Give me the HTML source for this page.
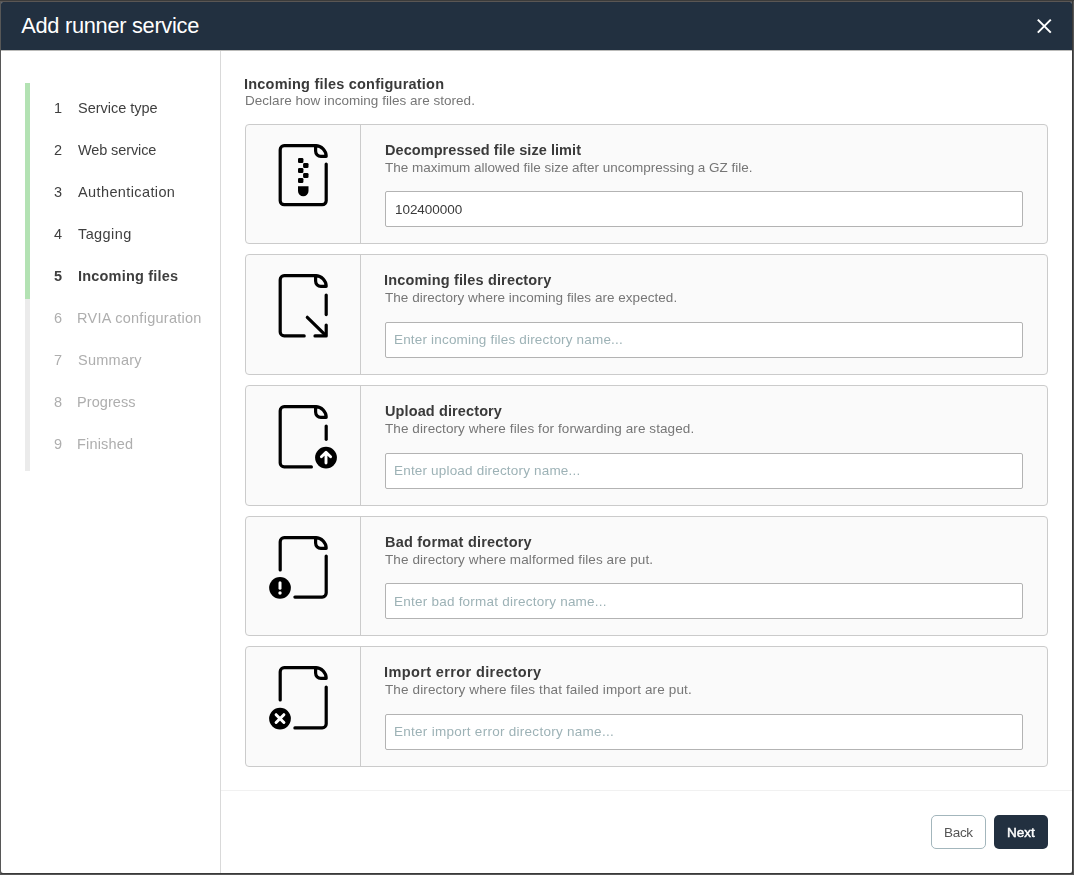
<!DOCTYPE html><html><head><meta charset="utf-8"><style>
*{box-sizing:border-box;margin:0;padding:0}
html,body{width:1074px;height:875px;overflow:hidden}
body{background:#454545;position:relative;font-family:"Liberation Sans",sans-serif}
.a{position:absolute}
.t{position:absolute;white-space:nowrap;line-height:20px;will-change:transform}
#title{will-change:auto}
.card{position:absolute;left:245px;width:803px;border:1px solid #cbcbcb;border-radius:4px;background:#fafafa}
.card .div{position:absolute;left:114px;top:0;bottom:0;width:1px;background:#cbcbcb}
.inp{position:absolute;left:385px;width:638px;height:36px;border:1px solid #b3b3b3;border-radius:2px;background:#fff}
</style></head><body>
<div class="a" style="left:0;top:0;width:1074px;height:1px;background:#3b3b3b"></div>
<div class="a" style="left:0;top:1px;width:1074px;height:1px;background:#5a5654"></div>
<div class="a" style="left:0;top:1px;width:1px;height:874px;background:#575757"></div>
<div class="a" style="left:1072px;top:1px;width:1px;height:873px;background:#3a3a3a"></div>
<div class="a" style="left:1073px;top:1px;width:1px;height:874px;background:#575757"></div>
<div class="a" style="left:1px;top:873px;width:1072px;height:1px;background:#3a3a3a"></div>
<div class="a" style="left:1px;top:874px;width:1072px;height:1px;background:#575757"></div>
<div class="a" style="left:1px;top:2px;width:1071px;height:871px;background:#fff;border-radius:2px"></div>
<div class="a" style="left:1px;top:2px;width:1071px;height:48px;background:#223040;border-radius:2px 2px 0 0"></div>
<div class="a" style="left:1px;top:50px;width:1071px;height:1px;background:#bbbbb9"></div>
<div class="a" style="left:220px;top:51px;width:1px;height:822px;background:#d9d9d9"></div>
<div class="a" style="left:25px;top:83px;width:5px;height:216px;background:#b3e2b3"></div>
<div class="a" style="left:25px;top:299px;width:5px;height:172px;background:#ebebeb"></div>
<div class="a" style="left:221px;top:790px;width:851px;height:1px;background:#f1f1f1"></div>
<div class="card" style="top:124px;height:120px"><div class="div"></div></div>
<div class="inp" style="top:191px"></div>
<div class="card" style="top:254px;height:121px"><div class="div"></div></div>
<div class="inp" style="top:322px"></div>
<div class="card" style="top:385px;height:121px"><div class="div"></div></div>
<div class="inp" style="top:453px"></div>
<div class="card" style="top:516px;height:120px"><div class="div"></div></div>
<div class="inp" style="top:583px"></div>
<div class="card" style="top:646px;height:121px"><div class="div"></div></div>
<div class="inp" style="top:714px"></div>
<svg class="a" style="left:0;top:0" width="1074" height="875" viewBox="0 0 1074 875">
<path d="M315.6 145.7 H284.2 A4.0 4.0 0 0 0 280.2 149.7 V200.7 A4.0 4.0 0 0 0 284.2 204.7 H322.2 A4.0 4.0 0 0 0 326.2 200.7 V164.1" fill="none" stroke="#000" stroke-width="3.2" stroke-linecap="round" stroke-linejoin="round"/><path d="M315.6 145.7 V151.1 A5.2 5.2 0 0 0 320.8 156.29999999999998 H326.2 A10.599999999999966 10.599999999999994 0 0 0 315.6 145.7" fill="none" stroke="#000" stroke-width="3.2" stroke-linecap="round" stroke-linejoin="round"/><rect x="298" y="158" width="5.4" height="5.1" rx="1.3" fill="#000"/><rect x="303.1" y="163" width="5.4" height="5.1" rx="1.3" fill="#000"/><rect x="298" y="168" width="5.4" height="5.1" rx="1.3" fill="#000"/><rect x="303.1" y="173" width="5.4" height="5.1" rx="1.3" fill="#000"/><rect x="298" y="177.9" width="5.4" height="5.1" rx="1.3" fill="#000"/><path d="M298 186.2 H308.5 V191.1 A5.25 5.25 0 0 1 298 191.1 Z" fill="#000"/>
<path d="M315.6 275.7 H284.2 A4.0 4.0 0 0 0 280.2 279.7 V331.9 A4.0 4.0 0 0 0 284.2 335.9 H304.2" fill="none" stroke="#000" stroke-width="3.2" stroke-linecap="round" stroke-linejoin="round"/><path d="M315.6 275.7 V281.1 A5.2 5.2 0 0 0 320.8 286.3 H326.2 A10.599999999999966 10.600000000000023 0 0 0 315.6 275.7" fill="none" stroke="#000" stroke-width="3.2" stroke-linecap="round" stroke-linejoin="round"/><path d="M326.2 295.0 V314.59999999999997" fill="none" stroke="#000" stroke-width="3.2" stroke-linecap="round" stroke-linejoin="round"/><path d="M315 335.9 H326.2 V325.0" fill="none" stroke="#000" stroke-width="3.2" stroke-linecap="round" stroke-linejoin="round" stroke-linejoin="miter"/><path d="M307.3 317.3 L325.2 334.9" fill="none" stroke="#000" stroke-width="3.2" stroke-linecap="round" stroke-linejoin="round"/>
<path d="M315.6 406.7 H284.2 A4.0 4.0 0 0 0 280.2 410.7 V462.9 A4.0 4.0 0 0 0 284.2 466.9 H311.4" fill="none" stroke="#000" stroke-width="3.2" stroke-linecap="round" stroke-linejoin="round"/><path d="M315.6 406.7 V412.1 A5.2 5.2 0 0 0 320.8 417.3 H326.2 A10.599999999999966 10.600000000000023 0 0 0 315.6 406.7" fill="none" stroke="#000" stroke-width="3.2" stroke-linecap="round" stroke-linejoin="round"/><path d="M326.2 426.0 V439.3" fill="none" stroke="#000" stroke-width="3.2" stroke-linecap="round" stroke-linejoin="round"/><circle cx="326" cy="457.59999999999997" r="10.9" fill="#000"/><path d="M326 463.09999999999997 V452.49999999999994 M321.4 456.7 L326 452.29999999999995 L330.6 456.7" fill="none" stroke="#fff" stroke-width="2.9" stroke-linecap="round" stroke-linejoin="round"/>
<path d="M280.2 569.9000000000001 V541.7 A4.0 4.0 0 0 1 284.2 537.7 H315.6" fill="none" stroke="#000" stroke-width="3.2" stroke-linecap="round" stroke-linejoin="round"/><path d="M315.6 537.7 V543.1 A5.2 5.2 0 0 0 320.8 548.3000000000001 H326.2 A10.599999999999966 10.600000000000023 0 0 0 315.6 537.7" fill="none" stroke="#000" stroke-width="3.2" stroke-linecap="round" stroke-linejoin="round"/><path d="M326.2 556.1 V593.1 A4.0 4.0 0 0 1 322.2 597.1 H294.9" fill="none" stroke="#000" stroke-width="3.2" stroke-linecap="round" stroke-linejoin="round"/><circle cx="280" cy="587.8000000000001" r="10.85" fill="#000"/><path d="M280 582.7 V588.2" fill="none" stroke="#fff" stroke-width="3" stroke-linecap="round"/><circle cx="280" cy="593.0000000000001" r="1.7" fill="#fff"/>
<path d="M280.2 699.9000000000001 V671.7 A4.0 4.0 0 0 1 284.2 667.7 H315.6" fill="none" stroke="#000" stroke-width="3.2" stroke-linecap="round" stroke-linejoin="round"/><path d="M315.6 667.7 V673.1 A5.2 5.2 0 0 0 320.8 678.3000000000001 H326.2 A10.599999999999966 10.600000000000023 0 0 0 315.6 667.7" fill="none" stroke="#000" stroke-width="3.2" stroke-linecap="round" stroke-linejoin="round"/><path d="M326.2 687.0 V723.9 A4.0 4.0 0 0 1 322.2 727.9 H294.9" fill="none" stroke="#000" stroke-width="3.2" stroke-linecap="round" stroke-linejoin="round"/><circle cx="280" cy="718.6" r="10.85" fill="#000"/><path d="M276.1 714.7 L283.9 722.5 M283.9 714.7 L276.1 722.5" fill="none" stroke="#fff" stroke-width="3" stroke-linecap="round"/>
<path d="M1037.8 19.6 L1050.8 32.6 M1050.8 19.6 L1037.8 32.6" stroke="#fff" stroke-width="2" fill="none"/>
</svg>
<div class="a" style="left:931px;top:815px;width:55px;height:34px;border:1px solid #a3b6bc;border-radius:5px;background:#fff"></div>
<div class="a" style="left:994px;top:815px;width:54px;height:34px;border-radius:5px;background:#223040"></div>
<div class="t" id="title" style="left:21.25px;top:15.71px;font-size:21.8px;font-weight:400;color:#ffffff;letter-spacing:-0.290px;">Add runner service<span style="display:inline-block;width:0;height:0"></span></div>
<div class="t" id="num0" style="left:53.96px;top:97.90px;font-size:14.5px;font-weight:400;color:#3f3f3f;letter-spacing:0.000px;">1<span style="display:inline-block;width:0;height:0"></span></div>
<div class="t" id="lab0" style="left:77.62px;top:97.90px;font-size:14.5px;font-weight:400;color:#3f3f3f;letter-spacing:-0.013px;">Service type<span style="display:inline-block;width:0;height:0"></span></div>
<div class="t" id="num1" style="left:53.84px;top:139.61px;font-size:14.5px;font-weight:400;color:#3f3f3f;letter-spacing:0.000px;">2<span style="display:inline-block;width:0;height:0"></span></div>
<div class="t" id="lab1" style="left:78.17px;top:139.61px;font-size:14.5px;font-weight:400;color:#3f3f3f;letter-spacing:-0.114px;">Web service<span style="display:inline-block;width:0;height:0"></span></div>
<div class="t" id="num2" style="left:53.98px;top:181.80px;font-size:14.5px;font-weight:400;color:#3f3f3f;letter-spacing:0.000px;">3<span style="display:inline-block;width:0;height:0"></span></div>
<div class="t" id="lab2" style="left:77.89px;top:181.80px;font-size:14.5px;font-weight:400;color:#3f3f3f;letter-spacing:0.387px;">Authentication<span style="display:inline-block;width:0;height:0"></span></div>
<div class="t" id="num3" style="left:53.99px;top:223.80px;font-size:14.5px;font-weight:400;color:#3f3f3f;letter-spacing:0.000px;">4<span style="display:inline-block;width:0;height:0"></span></div>
<div class="t" id="lab3" style="left:77.59px;top:223.80px;font-size:14.5px;font-weight:400;color:#3f3f3f;letter-spacing:0.402px;">Tagging<span style="display:inline-block;width:0;height:0"></span></div>
<div class="t" id="num4" style="left:53.54px;top:265.90px;font-size:14.5px;font-weight:700;color:#3f3f3f;letter-spacing:0.000px;">5<span style="display:inline-block;width:0;height:0"></span></div>
<div class="t" id="lab4" style="left:77.50px;top:265.90px;font-size:14.5px;font-weight:700;color:#3f3f3f;letter-spacing:0.198px;">Incoming files<span style="display:inline-block;width:0;height:0"></span></div>
<div class="t" id="num5" style="left:53.69px;top:307.90px;font-size:14.5px;font-weight:400;color:#aeaeae;letter-spacing:0.000px;">6<span style="display:inline-block;width:0;height:0"></span></div>
<div class="t" id="lab5" style="left:77.05px;top:307.90px;font-size:14.5px;font-weight:400;color:#aeaeae;letter-spacing:0.270px;">RVIA configuration<span style="display:inline-block;width:0;height:0"></span></div>
<div class="t" id="num6" style="left:53.90px;top:349.90px;font-size:14.5px;font-weight:400;color:#aeaeae;letter-spacing:0.000px;">7<span style="display:inline-block;width:0;height:0"></span></div>
<div class="t" id="lab6" style="left:77.74px;top:349.90px;font-size:14.5px;font-weight:400;color:#aeaeae;letter-spacing:0.246px;">Summary<span style="display:inline-block;width:0;height:0"></span></div>
<div class="t" id="num7" style="left:53.90px;top:392.01px;font-size:14.5px;font-weight:400;color:#aeaeae;letter-spacing:0.000px;">8<span style="display:inline-block;width:0;height:0"></span></div>
<div class="t" id="lab7" style="left:77.05px;top:392.01px;font-size:14.5px;font-weight:400;color:#aeaeae;letter-spacing:0.069px;">Progress<span style="display:inline-block;width:0;height:0"></span></div>
<div class="t" id="num8" style="left:53.69px;top:433.61px;font-size:14.5px;font-weight:400;color:#aeaeae;letter-spacing:0.000px;">9<span style="display:inline-block;width:0;height:0"></span></div>
<div class="t" id="lab8" style="left:77.05px;top:433.61px;font-size:14.5px;font-weight:400;color:#aeaeae;letter-spacing:0.167px;">Finished<span style="display:inline-block;width:0;height:0"></span></div>
<div class="t" id="head" style="left:243.50px;top:73.80px;font-size:14.5px;font-weight:700;color:#3a3a3a;letter-spacing:0.217px;">Incoming files configuration<span style="display:inline-block;width:0;height:0"></span></div>
<div class="t" id="sub" style="left:244.62px;top:90.91px;font-size:13.5px;font-weight:400;color:#767676;letter-spacing:0.028px;">Declare how incoming files are stored.<span style="display:inline-block;width:0;height:0"></span></div>
<div class="t" id="ct0" style="left:384.90px;top:139.80px;font-size:14.5px;font-weight:700;color:#3a3a3a;letter-spacing:0.066px;">Decompressed file size limit<span style="display:inline-block;width:0;height:0"></span></div>
<div class="t" id="cd0" style="left:384.53px;top:157.90px;font-size:13.5px;font-weight:400;color:#767676;letter-spacing:-0.015px;">The maximum allowed file size after uncompressing a GZ file.<span style="display:inline-block;width:0;height:0"></span></div>
<div class="t" id="in0" style="left:394.77px;top:200.01px;font-size:13.5px;font-weight:400;color:#3a3a3a;letter-spacing:-0.054px;">102400000<span style="display:inline-block;width:0;height:0"></span></div>
<div class="t" id="ct1" style="left:383.90px;top:269.80px;font-size:14.5px;font-weight:700;color:#3a3a3a;letter-spacing:0.159px;">Incoming files directory<span style="display:inline-block;width:0;height:0"></span></div>
<div class="t" id="cd1" style="left:384.53px;top:287.90px;font-size:13.5px;font-weight:400;color:#767676;letter-spacing:0.037px;">The directory where incoming files are expected.<span style="display:inline-block;width:0;height:0"></span></div>
<div class="t" id="ph1" style="left:394.39px;top:330.01px;font-size:13.5px;font-weight:400;color:#9db2b6;letter-spacing:0.179px;">Enter incoming files directory name...<span style="display:inline-block;width:0;height:0"></span></div>
<div class="t" id="ct2" style="left:384.62px;top:400.80px;font-size:14.5px;font-weight:700;color:#3a3a3a;letter-spacing:0.114px;">Upload directory<span style="display:inline-block;width:0;height:0"></span></div>
<div class="t" id="cd2" style="left:384.53px;top:418.90px;font-size:13.5px;font-weight:400;color:#767676;letter-spacing:0.088px;">The directory where files for forwarding are staged.<span style="display:inline-block;width:0;height:0"></span></div>
<div class="t" id="ph2" style="left:394.39px;top:461.01px;font-size:13.5px;font-weight:400;color:#9db2b6;letter-spacing:0.183px;">Enter upload directory name...<span style="display:inline-block;width:0;height:0"></span></div>
<div class="t" id="ct3" style="left:384.90px;top:531.80px;font-size:14.5px;font-weight:700;color:#3a3a3a;letter-spacing:0.212px;">Bad format directory<span style="display:inline-block;width:0;height:0"></span></div>
<div class="t" id="cd3" style="left:384.53px;top:549.90px;font-size:13.5px;font-weight:400;color:#767676;letter-spacing:0.091px;">The directory where malformed files are put.<span style="display:inline-block;width:0;height:0"></span></div>
<div class="t" id="ph3" style="left:394.39px;top:592.01px;font-size:13.5px;font-weight:400;color:#9db2b6;letter-spacing:0.234px;">Enter bad format directory name...<span style="display:inline-block;width:0;height:0"></span></div>
<div class="t" id="ct4" style="left:383.90px;top:661.80px;font-size:14.5px;font-weight:700;color:#3a3a3a;letter-spacing:0.381px;">Import error directory<span style="display:inline-block;width:0;height:0"></span></div>
<div class="t" id="cd4" style="left:384.53px;top:679.90px;font-size:13.5px;font-weight:400;color:#767676;letter-spacing:0.125px;">The directory where files that failed import are put.<span style="display:inline-block;width:0;height:0"></span></div>
<div class="t" id="ph4" style="left:394.39px;top:722.01px;font-size:13.5px;font-weight:400;color:#9db2b6;letter-spacing:0.275px;">Enter import error directory name...<span style="display:inline-block;width:0;height:0"></span></div>
<div class="t" id="back" style="left:943.90px;top:822.72px;font-size:13.5px;font-weight:400;color:#555555;letter-spacing:-0.300px;">Back<span style="display:inline-block;width:0;height:0"></span></div>
<div class="t" id="next" style="left:1006.99px;top:822.72px;font-size:13.5px;font-weight:400;color:#ffffff;letter-spacing:0.025px;-webkit-text-stroke:0.45px #fff">Next<span style="display:inline-block;width:0;height:0"></span></div>
</body></html>
